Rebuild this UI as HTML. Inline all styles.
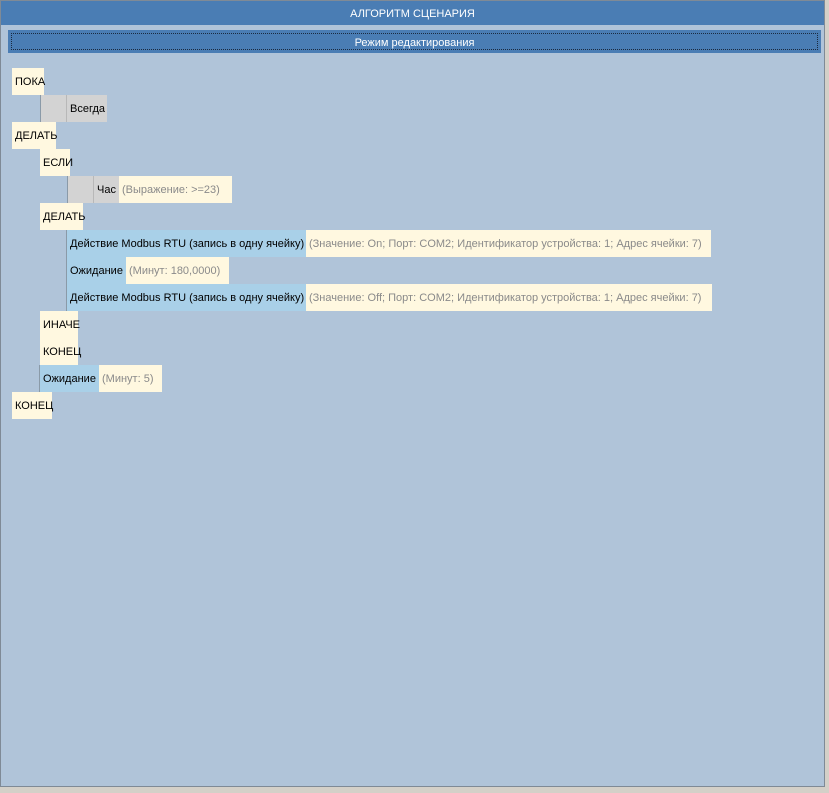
<!DOCTYPE html>
<html><head><meta charset="utf-8"><style>
html,body{margin:0;padding:0;width:829px;height:793px;background:#d4d0c8;overflow:hidden;font-family:"Liberation Sans","DejaVu Sans",sans-serif;font-size:11px}
#p{position:absolute;left:0;top:0;width:823px;height:785px;background:#b0c4d9;border:1px solid #7f8a96}
#h{position:absolute;left:0;top:0;width:823px;height:24px;background:#4a7db4;color:#fff;text-align:center;line-height:26px;font-size:11px}
#m{position:absolute;left:7px;top:29px;width:813px;height:23px;background:#4a7db4;color:#fff;text-align:center;line-height:26px}
#m:before{content:"";position:absolute;left:3px;right:3px;top:3px;bottom:3px;border:1px dotted #1a2a40}
.b{position:absolute;height:27px;line-height:28px;white-space:nowrap;padding-left:3px;box-sizing:border-box;color:#000}
.y{background:#fff8e0}
.u{background:#a9d0e8}
.g{background:#d3d3d3}
.c{color:#8a8a8a}
.v{position:absolute;width:1px;background:#8a9aa8}
</style></head><body>
<div id="p">
<div id="h">АЛГОРИТМ СЦЕНАРИЯ</div>
<div id="m">Режим редактирования</div>
</div>
<div class="b y" style="left:12px;top:68px;width:32px">ПОКА</div>
<div class="b g" style="left:40px;top:95px;width:26px"></div>
<div class="b g" style="left:66px;top:95px;width:41px;border-left:1px solid #b8b8b8">Всегда</div>
<div class="v" style="left:40px;top:95px;height:27px"></div>
<div class="b y" style="left:12px;top:122px;width:44px">ДЕЛАТЬ</div>
<div class="b y" style="left:40px;top:149px;width:30px">ЕСЛИ</div>
<div class="b g" style="left:67px;top:176px;width:26px"></div>
<div class="b g" style="left:93px;top:176px;width:26px;border-left:1px solid #b8b8b8">Час</div>
<div class="b y c" style="left:119px;top:176px;width:113px">(Выражение: &gt;=23)</div>
<div class="v" style="left:67px;top:176px;height:27px"></div>
<div class="b y" style="left:40px;top:203px;width:43px">ДЕЛАТЬ</div>
<div class="b u" style="left:67px;top:230px;width:239px">Действие Modbus RTU (запись в одну ячейку)</div>
<div class="b y c" style="left:306px;top:230px;width:405px">(Значение: On; Порт: COM2; Идентификатор устройства: 1; Адрес ячейки: 7)</div>
<div class="b u" style="left:67px;top:257px;width:59px">Ожидание</div>
<div class="b y c" style="left:126px;top:257px;width:103px">(Минут: 180,0000)</div>
<div class="b u" style="left:67px;top:284px;width:239px">Действие Modbus RTU (запись в одну ячейку)</div>
<div class="b y c" style="left:306px;top:284px;width:406px">(Значение: Off; Порт: COM2; Идентификатор устройства: 1; Адрес ячейки: 7)</div>
<div class="v" style="left:66px;top:230px;height:81px"></div>
<div class="b y" style="left:40px;top:311px;width:38px">ИНАЧЕ</div>
<div class="b y" style="left:40px;top:338px;width:38px">КОНЕЦ</div>
<div class="b u" style="left:40px;top:365px;width:59px">Ожидание</div>
<div class="b y c" style="left:99px;top:365px;width:63px">(Минут: 5)</div>
<div class="v" style="left:39px;top:365px;height:27px"></div>
<div class="b y" style="left:12px;top:392px;width:40px">КОНЕЦ</div>
</body></html>
